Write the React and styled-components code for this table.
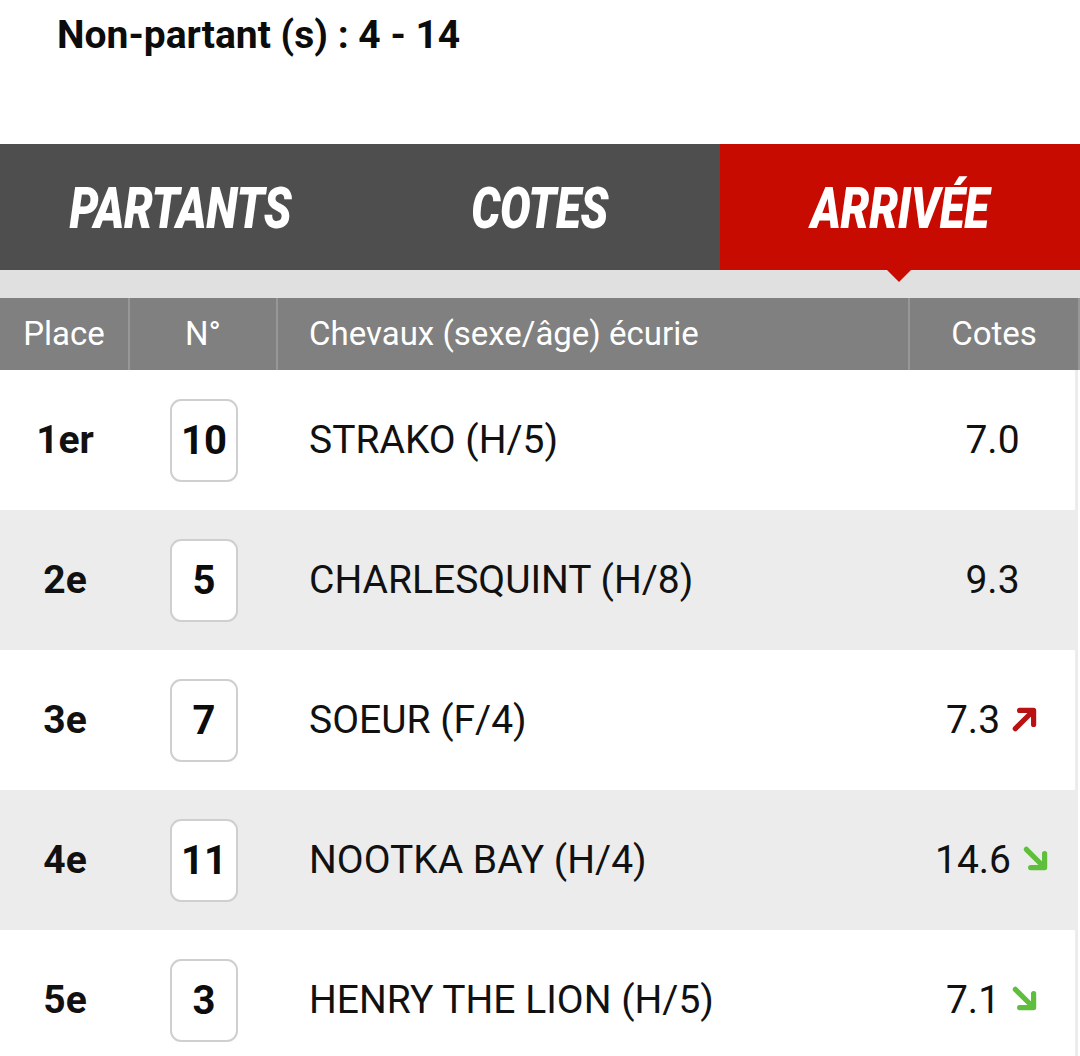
import React from 'react';
import styled, { createGlobalStyle } from 'styled-components';

const GlobalStyle = createGlobalStyle`
  html, body {
    margin: 0;
    padding: 0;
    background: #ffffff;
    overflow: hidden;
  }
  body {
    font-family: Roboto, 'Liberation Sans', sans-serif;
    color: #111111;
  }
`;

const Page = styled.div`
  width: 1080px;
`;

const Title = styled.h1`
  margin: 0;
  height: 144px;
  box-sizing: border-box;
  padding: 16px 0 0 57px;
  font-size: 39px;
  line-height: 39px;
  font-weight: 700;
  color: #0c0c0c;
`;

const Tabs = styled.div`
  display: grid;
  grid-template-columns: repeat(3, 1fr);
  height: 126px;
  background: #4e4e4e;
`;

const Tab = styled.div`
  position: relative;
  display: flex;
  align-items: center;
  justify-content: center;
  background: ${(p) => (p.active ? '#c80b00' : 'transparent')};

  ${(p) =>
    p.active &&
    `
    &::after {
      content: '';
      position: absolute;
      left: 50%;
      bottom: -12px;
      margin-left: -13px;
      border-left: 12px solid transparent;
      border-right: 12px solid transparent;
      border-top: 12px solid #c80b00;
    }
  `}
`;

const TabLabel = styled.span`
  display: inline-block;
  color: #ffffff;
  font-size: 58px;
  font-weight: 900;
  font-style: italic;
  letter-spacing: -0.5px;
  transform: scaleX(0.79);
  margin-top: 2px;
`;

const Band = styled.div`
  height: 28px;
  background: #e0e0e0;
`;

const cols = '130px 148px 632px 1fr';

const HeadRow = styled.div`
  display: grid;
  grid-template-columns: ${cols};
  height: 72px;
  background: #808080;
`;

const HeadCell = styled.div`
  display: flex;
  align-items: center;
  justify-content: ${(p) => (p.left ? 'flex-start' : 'center')};
  padding-left: ${(p) => (p.left ? '31px' : '0')};
  padding-bottom: 2px;
  color: #ffffff;
  font-size: 33px;
  border-right: 2px solid #979797;
  box-sizing: border-box;
`;

const Row = styled.div`
  display: grid;
  grid-template-columns: ${cols};
  height: 140px;
  background: ${(p) => (p.shaded ? '#ececec' : '#ffffff')};
  border-right: 3px solid #ececec;
  box-sizing: border-box;
  margin-right: 2px;
`;

const Cell = styled.div`
  display: flex;
  align-items: center;
  justify-content: ${(p) => (p.left ? 'flex-start' : 'center')};
  padding-left: ${(p) => (p.left ? '31px' : '0')};
  font-size: 39px;
  color: #111111;
`;

const Place = styled(Cell)`
  font-weight: 700;
  font-size: 39px;
`;

const NumBox = styled.div`
  width: 68px;
  height: 83px;
  box-sizing: border-box;
  border: 2px solid #cfcfcf;
  border-radius: 11px;
  background: #ffffff;
  display: flex;
  align-items: center;
  justify-content: center;
  font-size: 40px;
  font-weight: 700;
  color: #0c0c0c;
`;

const Arrow = styled.svg`
  width: 28px;
  height: 28px;
  margin-left: 11px;
  margin-top: -3px;
`;

const UpArrow = () => (
  <Arrow viewBox="0 0 26 26">
    <path
      d="M4 22 L20 6 M8 5 H21 V18"
      fill="none"
      stroke="#b81212"
      strokeWidth="4.8"
      strokeLinecap="round"
      strokeLinejoin="round"
    />
  </Arrow>
);

const DownArrow = () => (
  <Arrow viewBox="0 0 26 26">
    <path
      d="M4 4 L20 20 M8 21 H21 V8"
      fill="none"
      stroke="#5fbf3c"
      strokeWidth="4.8"
      strokeLinecap="round"
      strokeLinejoin="round"
    />
  </Arrow>
);

const results = [
  { place: '1er', num: 10, name: 'STRAKO (H/5)', cote: '7.0' },
  { place: '2e', num: 5, name: 'CHARLESQUINT (H/8)', cote: '9.3' },
  { place: '3e', num: 7, name: 'SOEUR (F/4)', cote: '7.3', trend: 'up' },
  { place: '4e', num: 11, name: 'NOOTKA BAY (H/4)', cote: '14.6', trend: 'down' },
  { place: '5e', num: 3, name: 'HENRY THE LION (H/5)', cote: '7.1', trend: 'down' },
];

export default function App() {
  return (
    <Page>
      <GlobalStyle />
      <Title>Non-partant (s) : 4 - 14</Title>

      <Tabs>
        <Tab>
          <TabLabel>PARTANTS</TabLabel>
        </Tab>
        <Tab>
          <TabLabel>COTES</TabLabel>
        </Tab>
        <Tab active>
          <TabLabel>ARRIVÉE</TabLabel>
        </Tab>
      </Tabs>
      <Band />

      <HeadRow>
        <HeadCell>Place</HeadCell>
        <HeadCell>N°</HeadCell>
        <HeadCell left>Chevaux (sexe/âge) écurie</HeadCell>
        <HeadCell>Cotes</HeadCell>
      </HeadRow>

      {results.map((r, i) => (
        <Row key={r.num} shaded={i % 2 === 1}>
          <Place>{r.place}</Place>
          <Cell>
            <NumBox>{r.num}</NumBox>
          </Cell>
          <Cell left>{r.name}</Cell>
          <Cell>
            {r.cote}
            {r.trend === 'up' && <UpArrow />}
            {r.trend === 'down' && <DownArrow />}
          </Cell>
        </Row>
      ))}
    </Page>
  );
}
